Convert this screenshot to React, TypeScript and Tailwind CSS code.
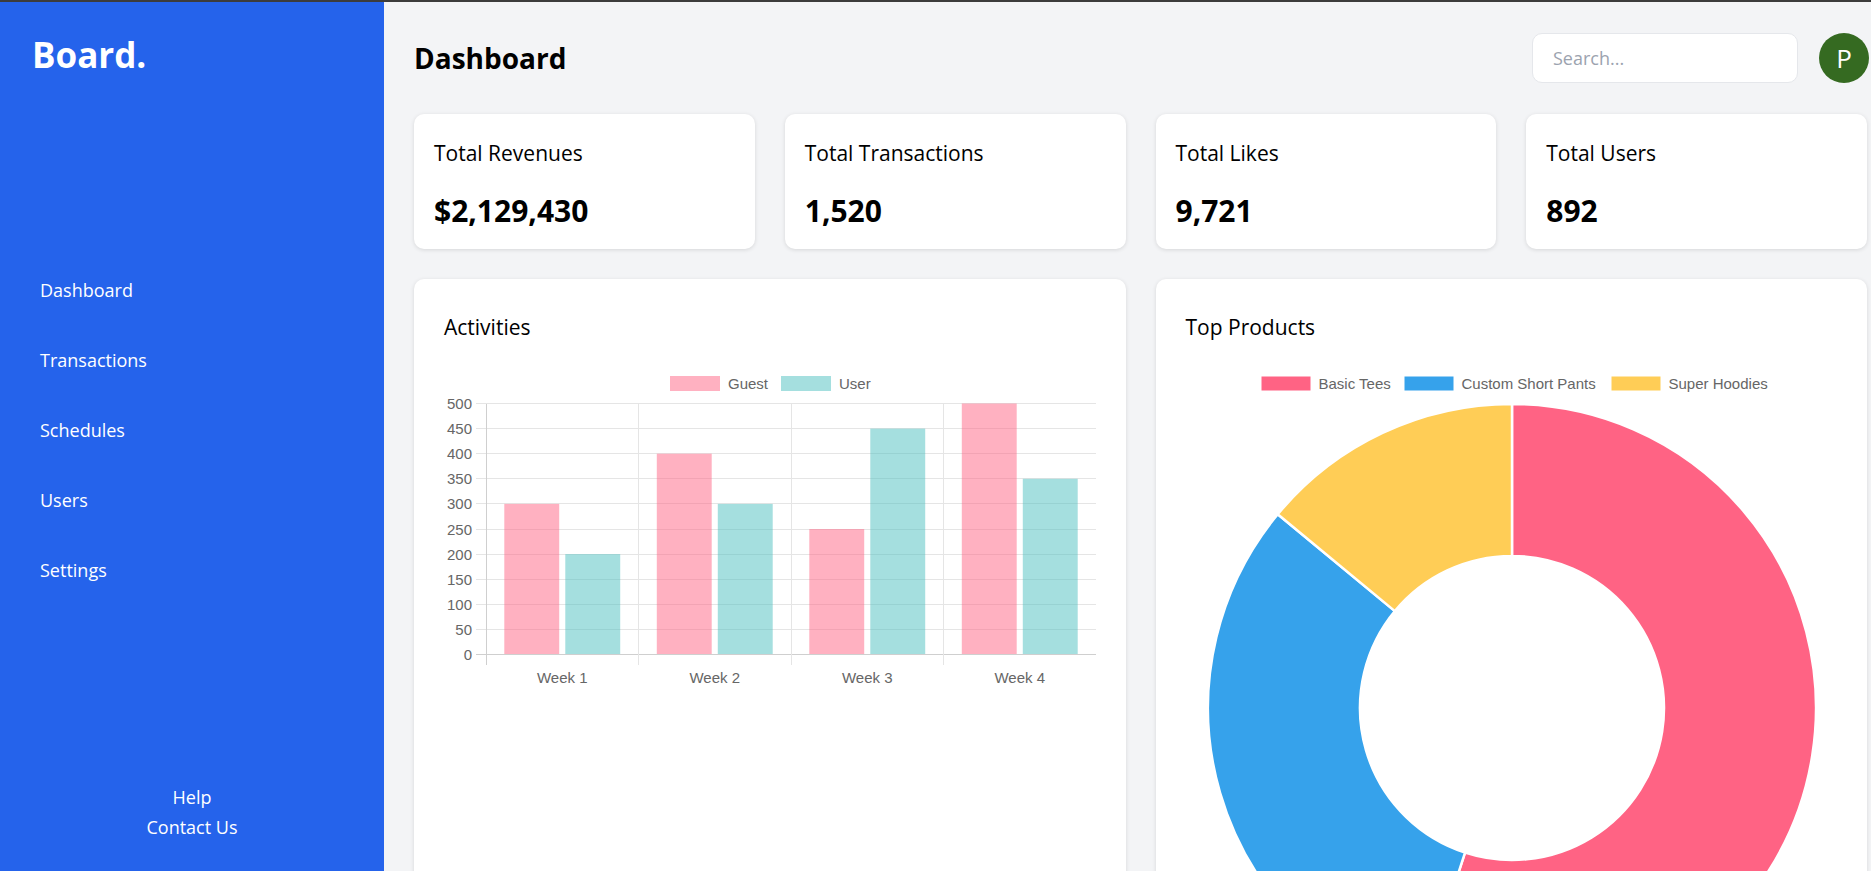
import React from "react";

const navItems = ["Dashboard", "Transactions", "Schedules", "Users", "Settings"];

const stats = [
  { title: "Total Revenues", value: "$2,129,430" },
  { title: "Total Transactions", value: "1,520" },
  { title: "Total Likes", value: "9,721" },
  { title: "Total Users", value: "892" },
];

const CHART_FONT = "'Liberation Sans', Arial, sans-serif";

function BarChart() {
  const W = 652;
  const H = 326;
  const xL = 42;
  const xR = 652;
  const yTop = 40.5;
  const yBot = 291.5;
  const cw = (xR - xL) / 4;
  const yv = (v: number) => yBot - (v / 500) * (yBot - yTop);
  const guest = [300, 400, 250, 500];
  const user = [200, 300, 450, 350];
  const ticks = [0, 50, 100, 150, 200, 250, 300, 350, 400, 450, 500];
  const crisp = (n: number) => Math.round(n) + 0.5;

  return (
    <svg width={W} height={H} viewBox={`0 0 ${W} ${H}`} className="block">
      <rect x={226} y={13} width={50} height={15} fill="rgba(255,99,132,0.5)" />
      <text x={284} y={20.5} fontSize={15} fill="#666" fontFamily={CHART_FONT} dominantBaseline="central">
        Guest
      </text>
      <rect x={337} y={13} width={50} height={15} fill="rgba(75,192,192,0.5)" />
      <text x={395} y={20.5} fontSize={15} fill="#666" fontFamily={CHART_FONT} dominantBaseline="central">
        User
      </text>

      {ticks.map((t) => (
        <g key={t}>
          <line
            x1={32}
            x2={xR}
            y1={crisp(yv(t) - 0.5)}
            y2={crisp(yv(t) - 0.5)}
            stroke={t === 0 ? "#cfcfcf" : "#e5e5e5"}
            strokeWidth={1}
            shapeRendering="crispEdges"
          />
          <text
            x={28}
            y={yv(t)}
            fontSize={15}
            fill="#666"
            fontFamily={CHART_FONT}
            textAnchor="end"
            dominantBaseline="central"
          >
            {t}
          </text>
        </g>
      ))}
      {[0, 1, 2, 3, 4].map((i) => (
        <line
          key={i}
          x1={crisp(xL + i * cw - 0.5)}
          x2={crisp(xL + i * cw - 0.5)}
          y1={yTop}
          y2={yBot + 10}
          stroke={i === 0 ? "#cfcfcf" : "#e5e5e5"}
          strokeWidth={1}
          shapeRendering="crispEdges"
        />
      ))}
      {guest.map((g, i) => {
        const start = xL + i * cw;
        const gx = start + cw * 0.1 + ((cw * 0.8) / 2) * 0.05;
        const bw = ((cw * 0.8) / 2) * 0.9;
        const ux = gx + (cw * 0.8) / 2;
        return (
          <g key={i}>
            <rect x={gx} y={yv(g)} width={bw} height={yBot - 0.5 - yv(g)} fill="rgba(255,99,132,0.5)" />
            <rect x={ux} y={yv(user[i])} width={bw} height={yBot - 0.5 - yv(user[i])} fill="rgba(75,192,192,0.5)" />
            <text
              x={start + cw / 2}
              y={314}
              fontSize={15}
              fill="#666"
              fontFamily={CHART_FONT}
              textAnchor="middle"
              dominantBaseline="central"
            >
              {`Week ${i + 1}`}
            </text>
          </g>
        );
      })}
    </svg>
  );
}

function sector(cx: number, cy: number, r0: number, r1: number, a0: number, a1: number) {
  const p = (r: number, a: number) => [cx + r * Math.cos(a), cy + r * Math.sin(a)];
  const large = a1 - a0 > Math.PI ? 1 : 0;
  const [x0, y0] = p(r1, a0);
  const [x1, y1] = p(r1, a1);
  const [x2, y2] = p(r0, a1);
  const [x3, y3] = p(r0, a0);
  return `M${x0} ${y0} A${r1} ${r1} 0 ${large} 1 ${x1} ${y1} L${x2} ${y2} A${r0} ${r0} 0 ${large} 0 ${x3} ${y3} Z`;
}

function DoughnutChart() {
  const W = 650;
  const H = 650;
  const cx = 326;
  const cy = 345;
  const data = [
    { label: "Basic Tees", value: 55, color: "#ff6384", bx: 75 },
    { label: "Custom Short Pants", value: 31, color: "#36a2eb", bx: 218 },
    { label: "Super Hoodies", value: 14, color: "#ffcd56", bx: 425 },
  ];
  const total = data.reduce((s, d) => s + d.value, 0);
  let a = -Math.PI / 2;
  const arcs = data.map((d) => {
    const a0 = a;
    const a1 = a + (d.value / total) * Math.PI * 2;
    a = a1;
    return { ...d, a0, a1 };
  });
  return (
    <svg width={W} height={H} viewBox={`0 0 ${W} ${H}`} className="block">
      {data.map((d) => (
        <g key={d.label}>
          <rect x={d.bx} y={13} width={50} height={15} fill={d.color} stroke="#fff" strokeWidth={1} />
          <text
            x={d.bx + 57.5}
            y={20.5}
            fontSize={15}
            fill="#666"
            fontFamily={CHART_FONT}
            dominantBaseline="central"
          >
            {d.label}
          </text>
        </g>
      ))}
      {arcs.map((s) => (
        <path
          key={s.label}
          d={sector(cx, cy, 152, 304, s.a0, s.a1)}
          fill={s.color}
          stroke="#fff"
          strokeWidth={2.5}
          strokeLinejoin="round"
        />
      ))}
    </svg>
  );
}

export default function App() {
  return (
    <div className="h-screen flex flex-col overflow-hidden bg-[#f3f4f6] text-black font-['Open_Sans',sans-serif]">
      <div className="h-[2px] shrink-0 bg-[#3c3c3c]" />
      <div className="flex flex-1 min-h-0">
        <aside className="w-[384px] shrink-0 bg-[#2563eb] text-white flex flex-col">
          <div className="pt-[35px] px-8 text-[35px] font-bold leading-none">Board.</div>
          <nav className="mt-[183px] flex flex-col pl-10 text-lg">
            {navItems.map((n) => (
              <a key={n} href="#" className="py-[21px] leading-7">
                {n}
              </a>
            ))}
          </nav>
          <div className="mt-auto pb-[29px] text-center text-lg leading-[30px]">
            <div>Help</div>
            <div>Contact Us</div>
          </div>
        </aside>

        <main className="flex-1 min-w-0 pl-[30px] pr-[4px] pt-[31px] overflow-hidden">
          <header className="h-[50px] flex items-center justify-between mr-[-2px]">
            <h1 className="text-[28px] font-bold leading-none">Dashboard</h1>
            <div className="flex items-center gap-[21px]">
              <input
                type="text"
                placeholder="Search..."
                className="w-[266px] h-[50px] rounded-[10px] border border-[#e5e7eb] bg-white pl-5 text-lg outline-none placeholder:text-[#9ca3af]"
              />
              <div className="w-[50px] h-[50px] rounded-full bg-[#356a21] text-white flex items-center justify-center text-[26px]">
                P
              </div>
            </div>
          </header>

          <section className="mt-[31px] grid grid-cols-4 gap-[30px]">
            {stats.map((s) => (
              <div
                key={s.title}
                className="bg-white rounded-[10px] shadow-[0_1px_4px_rgba(0,0,0,0.12)] px-5 pt-[25px] pb-[20px]"
              >
                <div className="text-[21px] leading-7">{s.title}</div>
                <div className="mt-[26px] text-3xl font-bold leading-9">{s.value}</div>
              </div>
            ))}
          </section>

          <section className="mt-[30px] grid grid-cols-2 gap-[30px]">
            <div className="bg-white rounded-[10px] shadow-[0_1px_4px_rgba(0,0,0,0.12)] px-[30px] pt-[34px] pb-[30px]">
              <h2 className="text-[21px] leading-7 font-medium">Activities</h2>
              <div className="mt-[22px]">
                <BarChart />
              </div>
            </div>
            <div className="bg-white rounded-[10px] shadow-[0_1px_4px_rgba(0,0,0,0.12)] px-[30px] pt-[34px] pb-[30px]">
              <h2 className="text-[21px] leading-7 font-medium">Top Products</h2>
              <div className="mt-[22px]">
                <DoughnutChart />
              </div>
            </div>
          </section>
        </main>
      </div>
    </div>
  );
}
